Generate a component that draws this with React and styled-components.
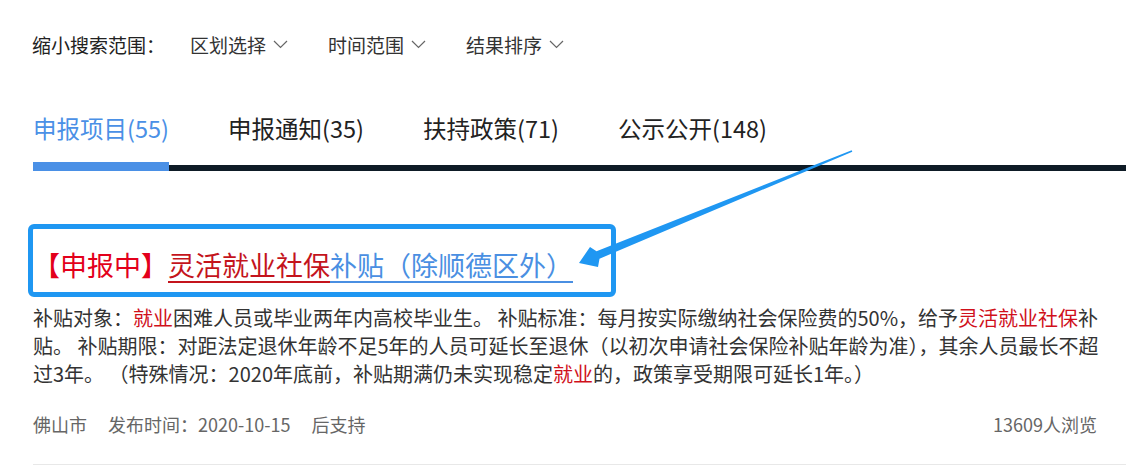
import styled, { createGlobalStyle } from 'styled-components';

const GlobalStyle = createGlobalStyle`
  html, body {
    margin: 0;
    padding: 0;
    background: #ffffff;
  }
  body {
    font-family: "Noto Sans CJK SC", "Noto Sans", "Liberation Sans", sans-serif;
    color: #333;
  }
`;

const Page = styled.div`
  position: relative;
  width: 1126px;
  min-height: 467px;
  overflow: hidden;
`;

const FilterBar = styled.div`
  display: flex;
  align-items: center;
  height: 88px;
  padding-left: 32px;
  font-size: 19px;
  color: #222;
`;

const FilterLabel = styled.span`
  margin-right: 25px;
`;

const Dropdown = styled.div`
  display: flex;
  align-items: center;
  gap: 7px;
  margin-right: 40px;
  color: #333;
  cursor: pointer;
`;

const TabBar = styled.div`
  display: flex;
  margin-top: 24px;
  margin-left: 33px;
  border-bottom: 6px solid #0e1b26;
`;

const Tab = styled.div`
  font-size: 23.5px;
  line-height: 32px;
  padding-bottom: 18px;
  margin-right: 59px;
  margin-bottom: -6px;
  border-bottom: 9px solid ${(p) => (p.$active ? '#4a90e6' : 'transparent')};
  color: ${(p) => (p.$active ? '#4a90e6' : '#222')};
  cursor: pointer;
`;

const Item = styled.div`
  margin-left: 33px;
  padding-bottom: 28px;
  border-bottom: 1px solid #e8e8e8;
`;

const Title = styled.div`
  margin-top: 76px;
  font-size: 27px;
  line-height: 36px;
  white-space: nowrap;
`;

const Status = styled.span`
  color: #e3001b;
`;

const TitleLink = styled.a`
  color: ${(p) => (p.$hit ? '#c4141c' : '#4a8fe2')};
  text-decoration: underline;
  text-decoration-thickness: 1.5px;
  text-underline-offset: 5px;
`;

const Desc = styled.p`
  margin: 21px 0 0;
  width: 1066px;
  font-size: 20px;
  line-height: 28px;
  color: #333;
`;

const Hit = styled.span`
  color: #d0101b;
`;

const Meta = styled.div`
  display: flex;
  align-items: center;
  margin-top: 24px;
  padding-right: 29px;
  font-size: 18px;
  line-height: 24px;
  color: #666;
`;

const MetaPart = styled.span`
  margin-right: 21px;
`;

const Views = styled.span`
  margin-left: auto;
`;

const Highlight = styled.div`
  position: absolute;
  left: 28px;
  top: 224px;
  width: 578px;
  height: 63px;
  border: 5px solid #1f97f2;
  border-radius: 6px;
  pointer-events: none;
`;

const ArrowLayer = styled.svg`
  position: absolute;
  left: 0;
  top: 0;
  pointer-events: none;
`;

function Chevron() {
  return (
    <svg width="15" height="9" viewBox="0 0 15 9">
      <polyline points="1,1 7.5,7.5 14,1" fill="none" stroke="#666" strokeWidth="1.2" />
    </svg>
  );
}

const filters = ['区划选择', '时间范围', '结果排序'];
const tabs = [
  { name: '申报项目', count: 55 },
  { name: '申报通知', count: 35 },
  { name: '扶持政策', count: 71 },
  { name: '公示公开', count: 148 },
];

export default function App() {
  return (
    <Page>
      <GlobalStyle />
      <FilterBar>
        <FilterLabel>缩小搜索范围：</FilterLabel>
        {filters.map((f) => (
          <Dropdown key={f}>
            {f}
            <Chevron />
          </Dropdown>
        ))}
      </FilterBar>

      <TabBar>
        {tabs.map((t, i) => (
          <Tab key={t.name} $active={i === 0}>
            {t.name}({t.count})
          </Tab>
        ))}
      </TabBar>

      <Item>
        <Title>
          <Status>【申报中】</Status>
          <TitleLink $hit>灵活就业社保</TitleLink>
          <TitleLink>补贴（除顺德区外）</TitleLink>
        </Title>
        <Desc>
          补贴对象：<Hit>就业</Hit>困难人员或毕业两年内高校毕业生。 补贴标准：每月按实际缴纳社会保险费的50%，给予
          <Hit>灵活就业社保</Hit>补贴。 补贴期限：对距法定退休年龄不足5年的人员可延长至退休（以初次申请社会保险补贴年龄为准），其余人员最长不超过3年。
          （特殊情况：2020年底前，补贴期满仍未实现稳定<Hit>就业</Hit>的，政策享受期限可延长1年。）
        </Desc>
        <Meta>
          <MetaPart>佛山市</MetaPart>
          <MetaPart>发布时间：2020-10-15</MetaPart>
          <MetaPart>后支持</MetaPart>
          <Views>13609人浏览</Views>
        </Meta>
      </Item>

      <Highlight />
      <ArrowLayer width="1126" height="467">
        <polygon
          points="579,263 590,247 596.5,251.3 851.7,150.3 852.3,151.7 599.5,258.7 598,267"
          fill="#1f97f2"
        />
      </ArrowLayer>
    </Page>
  );
}
